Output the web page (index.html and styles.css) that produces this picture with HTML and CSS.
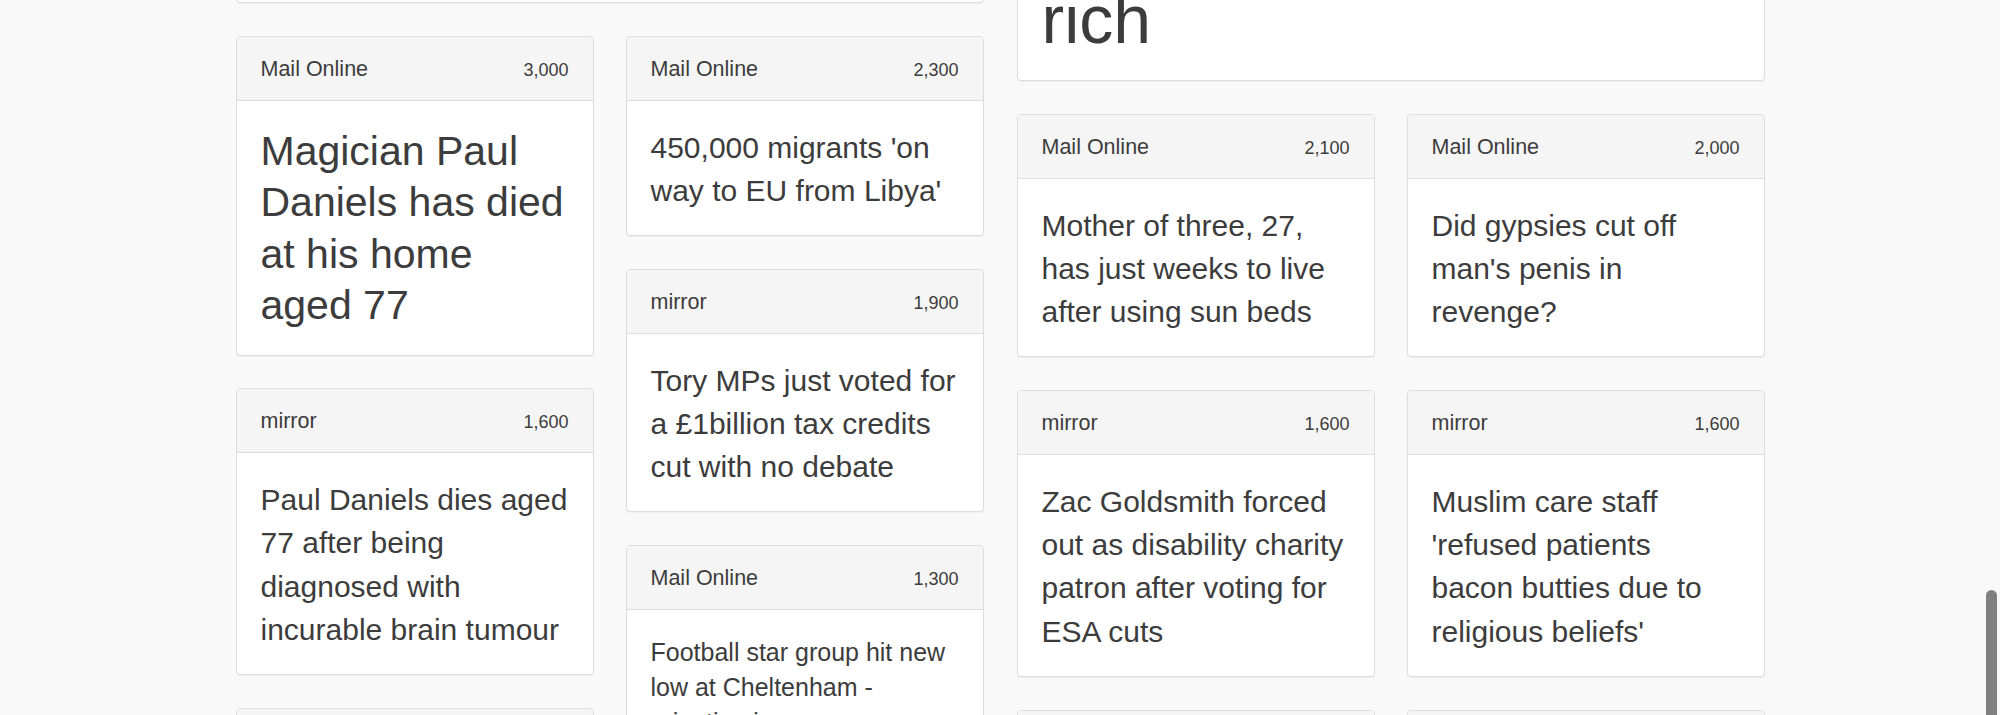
FILE: index.html
```html
<!DOCTYPE html>
<html lang="en">
<head>
<meta charset="utf-8">
<title>Most shared stories</title>
<link rel="stylesheet" href="styles.css">
</head>
<body>
<main class="wall">
  <section class="half">
    <div class="card card-tail"></div>
    <div class="cols">
      <div class="col">
        <article class="card">
          <header class="card-head"><span class="source">Mail Online</span><span class="count">3,000</span></header>
          <p class="card-body size-l">Magician Paul Daniels has died at his home aged 77</p>
        </article>
        <article class="card">
          <header class="card-head"><span class="source">mirror</span><span class="count">1,600</span></header>
          <p class="card-body size-m">Paul Daniels dies aged 77 after being diagnosed with incurable brain tumour</p>
        </article>
        <article class="card">
          <header class="card-head"></header>
        </article>
      </div>
      <div class="col">
        <article class="card">
          <header class="card-head"><span class="source">Mail Online</span><span class="count">2,300</span></header>
          <p class="card-body size-m">450,000 migrants 'on way to EU from Libya'</p>
        </article>
        <article class="card">
          <header class="card-head"><span class="source">mirror</span><span class="count">1,900</span></header>
          <p class="card-body size-m">Tory MPs just voted for a £1billion tax credits cut with no debate</p>
        </article>
        <article class="card">
          <header class="card-head"><span class="source">Mail Online</span><span class="count">1,300</span></header>
          <p class="card-body size-s">Football star group hit new low at Cheltenham - urinating in</p>
        </article>
      </div>
    </div>
  </section>
  <section class="half">
    <div class="card card-lead">
      <p class="card-body size-xl">rich</p>
    </div>
    <div class="cols">
      <div class="col">
        <article class="card">
          <header class="card-head"><span class="source">Mail Online</span><span class="count">2,100</span></header>
          <p class="card-body size-m">Mother of three, 27, has just weeks to live after using sun beds</p>
        </article>
        <article class="card">
          <header class="card-head"><span class="source">mirror</span><span class="count">1,600</span></header>
          <p class="card-body size-m">Zac Goldsmith forced out as disability charity patron after voting for ESA cuts</p>
        </article>
        <article class="card">
          <header class="card-head"></header>
        </article>
      </div>
      <div class="col">
        <article class="card">
          <header class="card-head"><span class="source">Mail Online</span><span class="count">2,000</span></header>
          <p class="card-body size-m">Did gypsies cut off man's penis in revenge?</p>
        </article>
        <article class="card">
          <header class="card-head"><span class="source">mirror</span><span class="count">1,600</span></header>
          <p class="card-body size-m">Muslim care staff 'refused patients bacon butties due to religious beliefs'</p>
        </article>
        <article class="card">
          <header class="card-head"></header>
        </article>
      </div>
    </div>
  </section>
</main>
<div class="scroll-thumb"></div>
</body>
</html>
```
FILE: styles.css
```css
* {
  box-sizing: border-box;
}

html,
body {
  margin: 0;
  height: 100%;
  overflow: hidden;
}

body {
  background: #f9f9f9;
  font-family: "Liberation Sans", Arial, Helvetica, sans-serif;
  color: #3c3c3c;
}

.wall {
  width: 1529px;
  margin: 0 auto;
  display: flex;
  gap: 33px;
  align-items: flex-start;
}

.half {
  width: 748px;
  display: flex;
  flex-direction: column;
  gap: 32.5px;
}

.cols {
  display: flex;
  gap: 32px;
  align-items: flex-start;
}

.col {
  width: 358px;
  display: flex;
  flex-direction: column;
  gap: 32.5px;
}

.card {
  background: #fff;
  border: 1px solid #ddd;
  border-radius: 4px;
  box-shadow: 0 1px 1px rgba(0, 0, 0, 0.05);
  overflow: hidden;
}

.card-tail {
  height: 40px;
  margin-top: -37px;
}

.card-lead {
  margin-top: -44px;
}

.card-head {
  height: 64px;
  display: flex;
  justify-content: space-between;
  align-items: baseline;
  padding: 21px 24px 19px;
  line-height: 23px;
  background: #f5f5f5;
  border-bottom: 1px solid #ddd;
}

.source {
  font-size: 21.5px;
}

.count {
  font-size: 18px;
}

.card-body {
  margin: 0;
  padding: 25px 24px 23px;
}

.size-xl {
  font-size: 68px;
  line-height: 75px;
}

.size-l {
  font-size: 41px;
  line-height: 51.5px;
}

.size-m {
  font-size: 30px;
  line-height: 43.3px;
}

.size-s {
  font-size: 25px;
  line-height: 35px;
}

.scroll-thumb {
  position: fixed;
  top: 590px;
  right: 3px;
  width: 11px;
  height: 200px;
  border-radius: 6px;
  background: #808080;
}
```
